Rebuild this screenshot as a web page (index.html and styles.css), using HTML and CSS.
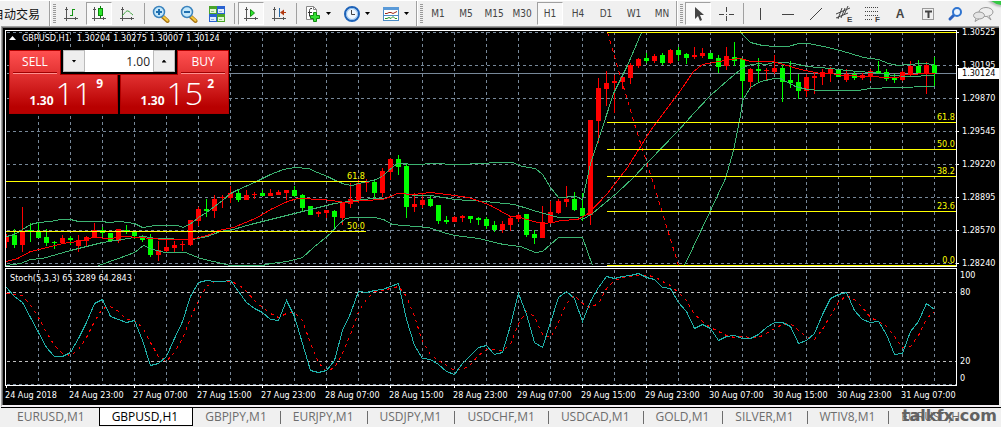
FILE: index.html
```html
<!DOCTYPE html>
<html lang="zh-CN">
<head>
<meta charset="utf-8">
<title>GBPUSD,H1</title>
<link rel="stylesheet" href="styles.css">
</head>
<body>
<svg class="defs" aria-hidden="true">
  <symbol id="axes" viewBox="0 0 16 16"><path d="M3.5 1v14M1 12.500h14M2 3.500h3M12.500 11v3" stroke="#555" fill="none"/></symbol>
  <symbol id="lens" viewBox="0 0 18 18">
    <path d="M10 11l5.500 5" stroke="#a87414" stroke-width="4" stroke-linecap="round"/>
    <path d="M10.500 11l5 4.500" stroke="#f5c93c" stroke-width="2" stroke-linecap="round"/>
    <circle cx="7" cy="7" r="5.500" fill="#c4e8fb" stroke="#3b83bd" stroke-width="1.500"/>
  </symbol>
</svg>

<header class="toolbars">
  <div class="bar bar-auto"><button class="auto">自动交易</button></div>

  <div class="bar">
    <span class="grip"></span>
    <button class="tool" aria-label="Bar chart"><svg width="16" height="16"><use href="#axes"/><path d="M9.500 3v7M9 3.500h3M7 9.500h3" stroke="#159415"/></svg></button>
    <button class="tool on" aria-label="Candlesticks"><svg width="16" height="16"><use href="#axes"/><path d="M9.500 0v12" stroke="#0a7a0a"/><rect x="7.500" y="2.500" width="4" height="7" fill="#2ee62e" stroke="#0a8a0a"/></svg></button>
    <button class="tool" aria-label="Line chart"><svg width="16" height="16"><use href="#axes"/><path d="M3 10C6 7 7 4.500 9 5s3 3 5 4" stroke="#3aa03a" fill="none"/></svg></button>
    <span class="sep"></span>
    <button class="tool" aria-label="Zoom in"><svg width="18" height="18"><use href="#lens"/><path d="M4 7h6M7 4v6" stroke="#1f6fb0" stroke-width="2"/></svg></button>
    <button class="tool" aria-label="Zoom out"><svg width="18" height="18"><use href="#lens"/><path d="M4 7h6" stroke="#1f6fb0" stroke-width="2"/></svg></button>
    <button class="tool" aria-label="Tile windows"><svg width="16" height="16"><path fill="#4aa52a" d="M0 0h8v8H0zM8 8h8v8H8z"/><path fill="#2a62d0" d="M8 0h8v8H8zM0 8h8v8H0z"/><path fill="#e2f6d6" d="M1 3h6v4H1z"/><path fill="#e2f6d6" d="M9 11h6v4H9z"/><path fill="#e0edfc" d="M9 3h6v4H9zM1 11h6v4H1z"/><path stroke="#8fbe86" d="M2 5.500h3M10 13.500h3"/><path stroke="#8facdf" d="M10 5.500h3M2 13.500h3"/></svg></button>
    <span class="sep"></span>
    <button class="tool on" aria-label="Auto scroll"><svg width="16" height="16"><use href="#axes"/><path d="M7.500 3.500v7l4-3.500z" fill="#2ee62e" stroke="#118a11"/></svg></button>
    <button class="tool" aria-label="Chart shift"><svg width="16" height="16"><use href="#axes"/><path d="M8.500 2v9" stroke="#2468a8"/><path d="M15 6.500h-5" stroke="#b03a10"/><path d="M9 6.500l4-3v6z" fill="#b03a10"/></svg></button>
    <span class="sep"></span>
    <button class="tool drop" aria-label="Indicators"><svg width="18" height="18"><path d="M2.500 1.500h7l3 3v10h-10z" fill="#fff" stroke="#888"/><path d="M9.500 1.500v3h3" fill="none" stroke="#888"/><path d="M8 3.500c-2-.5-2.500 1-2.500 2v6M4 7.500h4" stroke="#333" fill="none"/><path d="M9.500 7.500h3v3h3v3h-3v3h-3v-3h-3v-3h3z" fill="#35df35" stroke="#128a12"/></svg><i class="caret"></i></button>
    <button class="tool drop" aria-label="Periods"><svg width="18" height="18"><circle cx="9" cy="9" r="7" fill="#eef6fd" stroke="#1d62b8" stroke-width="2"/><circle cx="9" cy="9" r="5.500" fill="none" stroke="#8bbcec"/><path d="M8.500 5v4.500H12" stroke="#444" fill="none"/></svg><i class="caret"></i></button>
    <button class="tool drop" aria-label="Templates"><svg width="18" height="16"><rect x="1.500" y="1.500" width="15" height="13" fill="#fff" stroke="#4a8ac4"/><path fill="#5a9ad8" d="M1 1h16v3H1z"/><path d="M1.500 9.500h15" stroke="#4a8ac4"/><path d="M3 7.500h2l2-1h2l2 1 4-2" stroke="#a02818" fill="none"/><path d="M3 12.500h2l2-1 2 1 2-2 2 2h2" stroke="#229022" fill="none"/></svg><i class="caret"></i></button>
  </div>

  <div class="bar">
    <span class="grip"></span>
    <button class="tool">M1</button>
    <button class="tool">M5</button>
    <button class="tool">M15</button>
    <button class="tool">M30</button>
    <button class="tool on">H1</button>
    <button class="tool">H4</button>
    <button class="tool">D1</button>
    <button class="tool">W1</button>
    <button class="tool">MN</button>
  </div>

  <div class="bar bar-last">
    <span class="grip"></span>
    <button class="tool on" aria-label="Cursor"><svg width="16" height="16"><path d="M5 1v12l3-3 2 5 2-1-2-5h4z" fill="#444"/></svg></button>
    <button class="tool" aria-label="Crosshair"><svg width="16" height="16"><path d="M8.500 1v5M8.500 10v5M1 8.500h5M11 8.500h5M8 8.500h1" stroke="#444"/></svg></button>
    <span class="sep"></span>
    <button class="tool" aria-label="Vertical line"><svg width="16" height="16"><path d="M8.500 2v12" stroke="#444"/></svg></button>
    <button class="tool" aria-label="Horizontal line"><svg width="16" height="16"><path d="M2 8.500h12" stroke="#444"/></svg></button>
    <button class="tool" aria-label="Trendline"><svg width="16" height="16"><path d="M2 14L14 2" stroke="#444"/></svg></button>
    <button class="tool" aria-label="Equidistant channel"><svg width="18" height="18"><path d="M1 9l14-6M1 13l12-5M3 14L7 3M6 13l4-10M9 10l4-9" stroke="#444"/><text x="12" y="17" class="glyph">E</text></svg></button>
    <button class="tool" aria-label="Fibonacci"><svg width="18" height="18"><path d="M2 2.500h13M2 6.500h13M2 10.500h13M2 14.500h8" stroke="#444" stroke-dasharray="1 1"/><text x="12" y="17" class="glyph">F</text></svg></button>
    <button class="tool letter" aria-label="Text">A</button>
    <button class="tool" aria-label="Text label"><svg width="16" height="16"><rect x="2.500" y="2.500" width="11" height="11" fill="none" stroke="#444" stroke-dasharray="1 1"/><path d="M5 5.500h7M8.500 5v7" stroke="#444" stroke-width="2"/></svg></button>
    <button class="tool" aria-label="Search"><svg width="16" height="16"><path d="M2 13l4-4" stroke="#2b61c0" stroke-width="3" stroke-linecap="round"/><circle cx="9" cy="6" r="4" fill="#eaf4ff" stroke="#2f74d0" stroke-width="2"/></svg></button>
    <button class="tool" aria-label="Chat"><svg width="24" height="18"><ellipse cx="14" cy="7" rx="7" ry="4.500" fill="#eee" stroke="#999"/><path d="M17 11l2 4-4-3.500" fill="#eee" stroke="#999"/><ellipse cx="7" cy="10.500" rx="5.500" ry="3.500" fill="#e4e4e4" stroke="#999"/><path d="M4 13.500l-1 3 4-2.500" fill="#e4e4e4" stroke="#999"/></svg></button>
  </div>
  <span class="status-dot"></span>
</header>

<main class="workspace">
  <div class="chart">
    <svg id="price" class="plot" viewBox="5 30 952 237" role="img" aria-label="GBPUSD H1 price chart"></svg>
    <div class="scale">
      <span>1.30525</span><span>1.30195</span><span>1.29870</span><span>1.29545</span><span>1.29220</span><span>1.28895</span><span>1.28570</span><span>1.28240</span>
      <b class="now">1.30124</b>
    </div>

    <svg id="stoch" class="plot" viewBox="5 268 952 118" role="img" aria-label="Stochastic oscillator"></svg>
    <div class="levels">
      <div><span>100</span><span>80</span></div>
      <div><span>20</span><span>0</span></div>
    </div>

    <div class="times">
      <span>24 Aug 2018</span><span>24 Aug 23:00</span><span>27 Aug 07:00</span><span>27 Aug 15:00</span><span>27 Aug 23:00</span><span>28 Aug 07:00</span><span>28 Aug 15:00</span><span>28 Aug 23:00</span><span>29 Aug 07:00</span><span>29 Aug 15:00</span><span>29 Aug 23:00</span><span>30 Aug 07:00</span><span>30 Aug 15:00</span><span>30 Aug 23:00</span><span>31 Aug 07:00</span>
    </div>

    <div class="overlay">
      <div class="title"><svg width="7" height="4"><path d="M0 4l3.500-4L7 4z" fill="#fff"/></svg><span>GBPUSD,H1</span><span class="ohlc"><span>1.30204</span><span>1.30275</span><span>1.30007</span><span>1.30124</span></span></div>
      <div class="trade">
        <button class="deal"><span class="side">SELL</span><span class="quote"><b>1.30</b><span class="big">11</span><sup>9</sup></span></button>
        <button class="deal buy"><span class="side">BUY</span><span class="quote"><b>1.30</b><span class="big">15</span><sup>2</sup></span></button>
        <div class="lots">
          <button class="step" aria-label="Decrease volume"><i class="caret"></i></button>
          <input type="text" value="1.00" aria-label="Volume">
          <button class="step" aria-label="Increase volume"><i class="caret up"></i></button>
        </div>
      </div>
    </div>
  </div>
</main>

<nav class="tabs">
  <a href="#">EURUSD,M1</a>
  <a href="#" class="current">GBPUSD,H1</a>
  <a href="#">GBPJPY,M1</a>
  <a href="#">EURJPY,M1</a>
  <a href="#">USDJPY,M1</a>
  <a href="#">USDCHF,M1</a>
  <a href="#">USDCAD,M1</a>
  <a href="#">GOLD,M1</a>
  <a href="#">SILVER,M1</a>
  <a href="#">WTIV8,M1</a>
  <a href="#">EURUSD,H</a>
  <span class="mark">talkfx.com</span>
</nav>
<script src="chart.js"></script>
</body>
</html>
```
FILE: styles.css
```css
* { box-sizing: border-box; }

body {
  margin: 0;
  min-height: 100vh;
  display: flex;
  flex-direction: column;
  background: #f0f0f0;
  font-family: "DejaVu Sans Condensed", "Noto Sans", sans-serif;
  font-size: 9px;
  overflow-x: hidden;
}

button, input { font: inherit; margin: 0; padding: 0; border: 0; background: none; color: inherit; }
.defs { position: absolute; width: 0; height: 0; }

/* toolbars */
.toolbars {
  position: relative;
  display: flex;
  height: 26px;
  border-top: 1px solid #fff;
  overflow: hidden;
}
.bar {
  display: flex;
  flex: none;
  align-items: center;
  gap: 2px;
  padding: 0 1px 0 2px;
  border-right: 1px solid #a0a0a0;
  box-shadow: 1px 0 #fff;
  margin-right: 1px;
}
.bar-last { border-right: 0; box-shadow: none; }
.bar-auto { width: 50px; padding: 0 9px 0 0; justify-content: flex-end; }
.auto {
  flex: none;
  font: 12px/16px "Noto Sans CJK SC", sans-serif;
  color: #111;
  white-space: nowrap;
}
.grip {
  width: 3px;
  height: 19px;
  background: repeating-linear-gradient(#999 0 1px, #f0f0f0 1px 2px);
}
.sep { width: 1px; height: 21px; margin: 0 1px 0 2px; background: #a0a0a0; }
.tool {
  display: flex;
  align-items: center;
  justify-content: center;
  width: 26px;
  height: 23px;
  color: #444;
  font-size: 10px;
  border: 1px solid transparent;
}
.tool svg { display: block; flex: none; overflow: visible; }
.tool.on { background: #f8f8f8; border-color: #a0a0a0 #fff #fff #a0a0a0; }
.tool.drop { width: 37px; justify-content: flex-start; gap: 4px; padding-left: 3px; }
.tool.letter { font: bold 12px "Liberation Sans", sans-serif; }
.glyph { font: bold 8px "Liberation Sans", sans-serif; fill: #444; }
.caret {
  width: 5px;
  height: 3px;
  background: #000;
  clip-path: polygon(0 0, 100% 0, 50% 100%);
}
.caret.up { clip-path: polygon(50% 0, 100% 100%, 0 100%); }
.status-dot {
  position: absolute;
  top: -21px;
  right: -18px;
  width: 32px;
  height: 25px;
  border-radius: 50%;
  background: #35c845;
  box-shadow: 0 0 2px 2px #bbb;
}

/* chart window */
.workspace {
  margin: 0 2px 0 1px;
  padding: 3px 0 0 3px;
  background: #000;
  border: solid #a0a0a0;
  border-width: 1px 0 0 1px;
  border-bottom: 2px solid #f4f0f4;
  box-shadow: inset 1px 1px #696969;
}
.chart {
  position: relative;
  display: grid;
  grid-template-columns: minmax(0, 1fr) 42px;
  row-gap: 1px;
  color: #fff;
}
.plot { display: block; width: 100%; height: auto; }
.plot text { font-size: 9px; fill: #ff0; }
.plot text.name { fill: #fff; }
.crisp { shape-rendering: crispEdges; fill: none; }
.grid { stroke: #778899; stroke-dasharray: 3 3; }
.level { stroke: #c0c0c0; stroke-dasharray: 3 3; }
.frame { stroke: #fff; }
.price-line { stroke: #778899; }
.up { fill: #f00; }
.down { fill: #0f0; }
.band { stroke: #3cb371; }
.mean { stroke: #f00; }
.fib { stroke: #ff0; }
.swing { stroke: #f00; stroke-dasharray: 4 4; }
.main { stroke: #20b2aa; }
.signal { stroke: #f00; stroke-dasharray: 3 4; }

.scale {
  position: relative;
  display: flex;
  flex-direction: column;
  justify-content: space-between;
  margin: -3px 0 -2px;
  line-height: 11px;
}
.scale span { display: flex; align-items: center; gap: 3px; }
.scale span::before { content: ""; width: 2px; height: 1px; background: #fff; }
.now {
  position: absolute;
  top: 17%;
  left: 1px;
  right: 0;
  padding-left: 4px;
  background: #fff;
  color: #000;
  font-weight: normal;
}
.levels {
  display: flex;
  flex-direction: column;
  justify-content: space-between;
  padding: 2px 0 2px 3px;
  line-height: 11px;
}
.levels div { display: grid; row-gap: 6px; }
.times {
  display: grid;
  grid-template-columns: repeat(14, 64fr) 56fr;
  height: 19px;
  margin-top: -1px;
  line-height: 18px;
  white-space: nowrap;
}
.times span { position: relative; min-width: 0; width: 0; }
.times span::before {
  content: "";
  position: absolute;
  left: 1px;
  top: 0;
  width: 1px;
  height: 2px;
  background: #fff;
}

/* one-click trading */
.overlay { position: absolute; top: 2px; left: 4px; }
.title { display: flex; align-items: center; gap: 6px; height: 12px; white-space: nowrap; }
.title .ohlc { display: flex; gap: 3px; margin-left: 1px; }
.trade {
  position: relative;
  display: grid;
  grid-template-columns: 109px 109px;
  gap: 2px;
  margin-top: 6px;
  background: #000;
  font-family: "Open Sans", sans-serif;
  font-size: 12px;
}
.deal {
  display: flex;
  flex-direction: column;
  height: 64px;
  border: 1px solid #b00000;
  background: linear-gradient(#ff5050, #e03030 40%, #b80000 90%);
  color: #fff;
}
.side {
  width: 44px;
  margin-left: 3px;
  height: 23px;
  line-height: 22px;
  border-bottom: 1px solid #ff9090;
  box-shadow: inset 0 -1px #a00000;
}
.buy .side { align-self: flex-end; margin: 0 3px 0 0; }
.quote {
  display: flex;
  align-items: baseline;
  justify-content: flex-end;
  width: 100%;
  padding-right: 14px;
  line-height: 38px;
}
.big { margin-left: 2px; font-size: 32px; font-weight: 300; }
.quote sup { align-self: flex-start; margin-left: 4px; font-size: 12px; font-weight: bold; line-height: 20px; }
.lots {
  position: absolute;
  top: 0;
  left: 51px;
  right: 51px;
  display: grid;
  grid-template-columns: 22px 1fr 22px;
  height: 25px;
  border: solid #b00000;
  border-width: 0 1px 1px;
  padding: 0 2px 2px;
  background: #000;
}
.lots input { width: 100%; min-width: 0; padding-right: 3px; background: #fff; color: #222; text-align: right; }
.step { display: flex; align-items: center; justify-content: center; background: #eee; border: 1px solid #bbb; }

/* chart tabs */
.tabs {
  position: relative;
  display: flex;
  margin-left: 1px;
  height: 19px;
  border-top: 1px solid #000;
  overflow: hidden;
  font: 12px/18px "Open Sans", sans-serif;
}
.tabs a {
  position: relative;
  flex: none;
  padding: 0 14px 0 12px;
  color: #6d6d6d;
  text-decoration: none;
}
.tabs a:first-child { padding-left: 16px; }
.tabs a:not(:first-child, .current, :nth-last-child(2))::after {
  content: "";
  position: absolute;
  right: 0;
  top: 3px;
  width: 1px;
  height: 13px;
  background: #6d6d6d;
}
.tabs .current {
  background: #fff;
  color: #000;
  border: solid #000;
  border-width: 0 1px 1px;
}
.mark {
  position: absolute;
  right: 4px;
  top: -1px;
  font: bold 16px/18px "DejaVu Sans", sans-serif;
  color: #626262;
}
```
FILE: chart.js
```js
// One bar every 8px: colour, high, body top, body bottom, low
const bars = `
r234,236,242,248 g229,235,245,248 r207,231,245,252 g223,230,231,242 g223,231,238,238 g229,237,243,246 g241,242,243,249 r235,238,243,243
g236,238,240,245 r235,240,246,252 r236,237,241,246 r223,230,237,237 g227,230,233,237 g233,233,241,241 r229,229,241,243 g225,230,231,234
g231,231,236,239 g235,237,240,242 g234,239,255,257 r241,250,255,261 r240,247,251,252 r241,245,248,252 r241,244,245,251 r220,220,245,246
r207,209,221,226 g199,209,211,217 r195,199,211,218 r195,197,198,208 r186,193,198,203 g189,193,200,202 r190,195,200,200 r192,194,195,199
g190,193,196,196 r189,193,196,196 r190,192,195,195 r190,190,193,200 g186,190,196,197 g194,195,208,212 g206,206,215,215 r211,212,214,217
r210,210,213,218 g210,211,217,228 r202,202,218,225 r183,199,204,208 r180,183,200,203 r179,182,183,192 g179,182,193,199 r168,171,193,197
r158,159,172,180 g155,159,167,175 g163,166,207,218 r193,204,207,212 r193,200,205,208 g196,199,206,207 g205,205,221,224 g216,220,222,224
r216,217,222,222 r215,216,218,222 g216,216,219,223 g217,218,220,225 g217,219,226,229 g221,225,230,232 r221,224,230,233 r216,218,225,231
r214,215,219,222 g214,214,235,237 g230,234,238,244 r206,222,238,238 r201,212,223,224 r199,201,213,214 r186,199,202,207 g192,199,210,211
g193,208,216,221 r120,120,215,225 r78,88,121,143 r71,83,89,106 r75,81,83,113 r74,77,82,89 r63,65,78,84 r58,59,66,68
g53,58,61,63 r54,56,61,63 g53,55,63,65 r49,50,63,64 g47,50,55,61 g53,54,58,64 r47,55,57,59 r48,53,56,58
g53,53,59,59 g55,58,67,73 r47,56,66,70 g42,57,61,66 g58,59,81,98 r68,69,82,89 g58,69,71,83 r68,70,71,81
r55,68,72,74 g65,68,82,102 g61,80,83,88 g74,82,91,99 r74,77,91,97 r72,76,78,94 r69,72,77,85 r67,69,74,82
g69,69,77,77 r69,74,80,82 g72,74,78,80 r73,75,78,80 r69,71,76,81 g61,71,73,73 g69,72,79,81 g74,78,80,83
r71,72,80,81 r61,66,74,76 g60,66,73,73 r62,65,73,94 g57,65,73,86`.trim().split(/\s+/);

const bands = [
  "6,236 14,234 22,229 30,224 38,222 50,221 60,219 70,219 78,221 102,221 108,222 120,221 134,223 142,227 155,225 177,225 183,227 192,222 198,217 206,212 222,200 230,193 238,189 254,182 270,174 283,169 295,167 308,168 317,172 327,176 337,181 345,184 352,185 358,183 367,181 373,180 382,176 388,170 397,163 417,164 433,163 455,164 485,163 492,162 512,162 522,166 535,168 542,174 550,187 558,197 575,196 582,199 590,163 601,130 613,93 627,65 641,32",
  "740,31 742,34 750,42 762,45 774,46 788,46 798,43 808,43 823,46 840,50 863,57 870,58 878,59 888,63 898,65 907,64 923,63 934,64",
  "6,265 20,263 30,259 42,258 70,250 102,242 122,239 134,237 143,236 155,238 192,239 207,236 220,231 233,229 250,224 262,221 310,209 334,203 363,199 373,198 385,198 397,193 406,193 414,195 430,195 454,199 485,201 514,204 533,210 558,217 577,217 582,219 592,213 617,192 633,177 647,162 678,130 693,113 710,95 727,80 740,69 747,65 758,63 765,64 774,62 783,62 793,63 807,66 830,68 847,70 870,72 880,73 893,75 907,76 934,75",
  "98,265 118,258 134,252 143,245 152,249 165,252 185,252 200,258 213,261 230,265 262,265 270,263 287,261 302,257 313,247 330,233 338,224 345,218 353,217 374,217 383,219 392,224 403,225 428,227 443,232 454,235 478,238 503,244 520,246 535,252 542,251 558,237 582,237 592,265",
  "684,265 710,210 725,178 733,150 737,130 740,115 742,100 747,92 750,87 760,81 774,78 780,78 795,86 807,89 820,90 857,90 870,88 893,87 934,86"
];
const mean = "6,261 17,258 30,251 47,247 62,243 78,241 92,237 110,238 123,236 140,237 163,239 190,239 207,235 218,230 233,227 257,217 270,209 287,201 297,198 323,199 345,202 363,200 382,199 388,197 397,193 413,194 430,192 447,194 468,197 480,201 490,205 510,216 520,217 533,221 542,223 553,222 560,220 577,219 588,213 607,193 627,167 650,130 680,90 693,71 702,64 713,62 730,59 740,58 750,61 772,61 783,64 800,69 820,73 830,73 843,75 870,76 887,77 898,77 902,74 934,73";

const main = [
  287,296,302,317,332,347,356,356,352,338,322,303,299,316,319,322,320,340,365,363,356,338,321,296,282,280,281,281,280,291,302,
  308,312,319,320,300,316,343,370,372,370,360,330,313,291,292,290,289,286,283,319,345,358,359,364,371,374,363,355,347,345,354,
  352,325,293,314,342,347,322,297,291,298,321,301,287,276,278,276,275,273,277,279,287,288,302,311,328,324,328,340,336,335,338,338,
  334,327,322,322,326,343,340,333,314,298,294,292,310,319,322,321,334,354,353,331,321,303,309
];

const line = (cls, x1, y1, x2, y2) => `<path class="${cls}" d="M${x1} ${y1}L${x2} ${y2}"/>`;
const poly = (cls, points) => `<polyline class="${cls}" points="${points}"/>`;
const at = i => 6 + 8 * i;

function verticals(top, bottom) {
  let out = "";
  for (let x = 38; x < 956; x += 32) out += line("grid", x, top, x, bottom);
  return out;
}

function candle(bar, i) {
  const [high, top, bottom, low] = bar.slice(1).split(",").map(Number);
  const x = at(i);
  const left = Math.max(x - 2, 6);
  return `<path class="${bar[0] === "r" ? "up" : "down"}" d="M${x} ${high}h1V${low}h-1zM${left} ${top}H${x + 3}V${bottom}H${left}z"/>`;
}

function drawPrice() {
  let back = verticals(31, 266);
  for (let y = 32; y < 266; y += 33) back += line("grid", 6, y, 956, y);
  back += line("price-line", 6, 73, 956, 73);

  let front = bands.map(b => poly("band", b)).join("") + poly("mean", mean);
  front += poly("swing", "607,32 617,66 636,130 652,180 678,265");
  front += line("fib", 5, 181, 365, 181) + line("fib", 5, 231, 365, 231);
  let labels = `<text x="347" y="179">61.8</text><text x="347" y="229">50.0</text>`;
  for (const [y, name] of [[32, ""], [122, "61.8"], [149, "50.0"], [176, "38.2"], [211, "23.6"], [265, "0.0"]]) {
    front += line("fib", 606, y, 956, y);
    labels += `<text x="955" y="${y - 2}" text-anchor="end">${name}</text>`;
  }
  front += `<rect class="frame" x="5" y="30" width="951" height="236"/>`;

  document.getElementById("price").innerHTML =
    `<g class="crisp" transform="translate(.5 .5)">${back}</g>` +
    `<g shape-rendering="crispEdges">${bars.map(candle).join("")}</g>` +
    `<g class="crisp" transform="translate(.5 .5)">${front}</g>` + labels;
}

function drawStoch() {
  const signal = main.map((v, i) => {
    const part = main.slice(Math.max(0, i - 2), i + 1);
    return i < 2 ? 293 + i : part.reduce((a, b) => a + b, 0) / 3;
  });
  const points = list => list.map((v, i) => `${at(i)},${Math.round(v)}`).join(" ");
  document.getElementById("stoch").innerHTML =
    `<g class="crisp" transform="translate(.5 .5)">` + verticals(269, 385) +
    line("level", 6, 292, 956, 292) + line("level", 6, 361, 956, 361) + line("grid", 6, 384, 956, 384) +
    poly("signal", points(signal)) + poly("main", points(main)) +
    `<rect class="frame" x="5" y="268" width="951" height="117"/></g>` +
    `<text class="name" x="10" y="281">Stoch(5,3,3) 65.3289 64.2843</text>`;
}

drawPrice();
drawStoch();
```
